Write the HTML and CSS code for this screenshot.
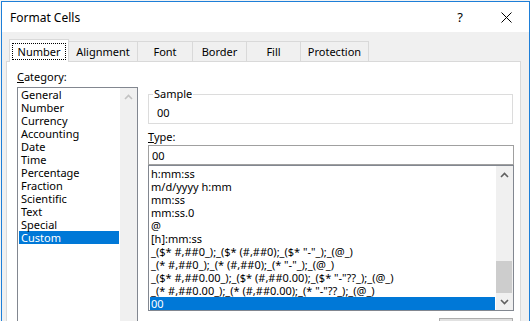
FILE: index.html
```html
<!DOCTYPE html>
<html lang="en">
<head>
    <meta charset="UTF-8">
    <meta name="viewport" content="width=device-width, initial-scale=1.0">
    <title>Format Cells</title>
    <link rel="stylesheet" href="styles.css">
</head>
<body>
    <div class="window" role="dialog" aria-labelledby="dlg-title">
        <!-- Title bar -->
        <div class="titlebar">
            <span id="dlg-title" class="title">Format Cells</span>
            <span class="help">?</span>
            <span class="close" aria-label="Close">
                <svg width="11" height="11" viewBox="0 0 11 11">
                    <path d="M0.5 0.5 L10.5 10.5 M10.5 0.5 L0.5 10.5" stroke="#000" stroke-width="1" fill="none"/>
                </svg>
            </span>
        </div>

        <div class="dlg-body">
            <!-- Tabs -->
            <div class="tabs">
                <div class="tab tab-active"><span class="focus">Number</span></div>
                <div class="tab tab-align">Alignment</div>
                <div class="tab tab-font">Font</div>
                <div class="tab tab-border">Border</div>
                <div class="tab tab-fill">Fill</div>
                <div class="tab tab-prot">Protection</div>
            </div>

            <div class="panel">
                <!-- Category column -->
                <div class="col-left">
                    <div class="label"><u>C</u>ategory:</div>
                    <div class="listbox cat-list">
                        <ul class="items">
                            <li>General</li>
                            <li>Number</li>
                            <li>Currency</li>
                            <li>Accounting</li>
                            <li>Date</li>
                            <li>Time</li>
                            <li>Percentage</li>
                            <li>Fraction</li>
                            <li>Scientific</li>
                            <li>Text</li>
                            <li>Special</li>
                            <li class="selected">Custom</li>
                        </ul>
                        <div class="scrollbar">
                            <div class="arrow">
                                <svg width="9" height="6" viewBox="0 0 9 6"><path d="M1 5 L4.5 1.5 L8 5" stroke="#c2c2c2" stroke-width="1.6" fill="none"/></svg>
                            </div>
                        </div>
                    </div>
                </div>

                <!-- Sample / type column -->
                <div class="col-right">
                    <fieldset class="sample">
                        <legend>Sample</legend>
                        <div class="sample-value">00</div>
                    </fieldset>

                    <div class="label type-label"><u>T</u>ype:</div>
                    <input class="type-input" type="text" value="00">

                    <div class="listbox type-list">
                        <ul class="items">
                            <li>h:mm:ss</li>
                            <li>m/d/yyyy h:mm</li>
                            <li>mm:ss</li>
                            <li>mm:ss.0</li>
                            <li>@</li>
                            <li>[h]:mm:ss</li>
                            <li>_($* #,##0_);_($* (#,##0);_($* "-"_);_(@_)</li>
                            <li>_(* #,##0_);_(* (#,##0);_(* "-"_);_(@_)</li>
                            <li>_($* #,##0.00_);_($* (#,##0.00);_($* "-"??_);_(@_)</li>
                            <li>_(* #,##0.00_);_(* (#,##0.00);_(* "-"??_);_(@_)</li>
                            <li class="selected">00</li>
                        </ul>
                        <div class="scrollbar">
                            <div class="arrow">
                                <svg width="9" height="6" viewBox="0 0 9 6"><path d="M1 5 L4.5 1.5 L8 5" stroke="#606060" stroke-width="1.6" fill="none"/></svg>
                            </div>
                            <div class="track"><div class="thumb"></div></div>
                            <div class="arrow">
                                <svg width="9" height="6" viewBox="0 0 9 6"><path d="M1 1 L4.5 4.5 L8 1" stroke="#606060" stroke-width="1.6" fill="none"/></svg>
                            </div>
                        </div>
                    </div>

                    <div class="btn-row">
                        <button class="btn" aria-label="Delete"></button>
                    </div>
                </div>
            </div>
        </div>
    </div>
</body>
</html>
```

FILE: styles.css
```css
/* Format Cells dialog */
html, body {
    margin: 0;
    height: 100%;
    overflow: hidden;
}

body {
    background-color: #f3f3f3;
    font-family: "Noto Sans", "Open Sans", sans-serif;
    font-size: 11px;
    color: #000;
}

.window {
    box-sizing: border-box;
    width: 529px;
    height: 340px;
    margin: 1px 0 0 1px;
    border: 1px solid #1e7fd8;
    background-color: #f0f0f0;
}

/* Title bar */
.titlebar {
    height: 30px;
    background-color: #fff;
    display: flex;
    align-items: center;
    padding-left: 8px;
}

.title {
    flex: 1;
    font-size: 12px;
}

.help {
    font-size: 13px;
    width: 46px;
    padding-left: 4px;
    text-align: center;
}

.close {
    width: 46px;
    display: flex;
    justify-content: center;
}

/* Body */
.dlg-body {
    padding: 7px 8px 0 4px;
}

.tabs {
    display: flex;
    align-items: flex-end;
    height: 22px;
    padding-left: 3px;
}

.tab {
    box-sizing: border-box;
    height: 20px;
    line-height: 19px;
    border-top: 1px solid #d9d9d9;
    border-right: 1px solid #d9d9d9;
    text-align: center;
    background-color: #f0f0f0;
}

.tab-active {
    position: relative;
    z-index: 1;
    width: 60px;
    height: 23px;
    margin-bottom: -1px;
    border: 1px solid #d9d9d9;
    border-bottom: none;
    background-color: #fff;
    padding-top: 3px;
    line-height: 13px;
}

.focus {
    display: inline-block;
    border: 1px dotted #000;
    padding: 1px 5px;
}

.tab-align  { width: 69px; }
.tab-font   { width: 55px; }
.tab-border { width: 54px; }
.tab-fill   { width: 54px; }
.tab-prot   { width: 68px; }

.panel {
    display: flex;
    gap: 10px;
    height: 300px;
    border: 1px solid #d9d9d9;
    background-color: #fff;
    padding: 8px 6px 0 10px;
}

.label {
    line-height: 14px;
    height: 14px;
}

/* List boxes */
.col-left {
    width: 121px;
}

.listbox {
    display: flex;
    box-sizing: border-box;
    border: 1px solid #828790;
    background-color: #fff;
}

.cat-list {
    margin-top: 3px;
    height: 240px;
}

.items {
    list-style: none;
    margin: 0;
    padding: 0 1px;
    flex: 1;
    overflow: hidden;
}

.items li {
    height: 13px;
    line-height: 13px;
    padding-left: 2px;
    white-space: nowrap;
}

.items li.selected {
    background-color: #0078d7;
    color: #fff;
}

.scrollbar {
    width: 17px;
    background-color: #f0f0f0;
    display: flex;
    flex-direction: column;
}

.arrow {
    height: 17px;
    display: flex;
    align-items: center;
    justify-content: center;
}

.track {
    flex: 1;
    display: flex;
    flex-direction: column;
}

.thumb {
    margin: auto 1px 0 0;
    height: 32px;
    background-color: #cdcdcd;
}

/* Right column */
.col-right {
    flex: 1;
    display: flex;
    flex-direction: column;
}

.sample {
    margin: 17px 1px 0 0;
    padding: 5px 8px 3px;
    border: 1px solid #dcdcdc;
    min-width: 0;
}

.sample legend {
    padding: 0 1px;
    margin-left: -4px;
    line-height: 14px;
}

.sample-value {
    line-height: 14px;
}

.type-label {
    margin-top: 6px;
}

.type-input {
    box-sizing: border-box;
    margin: 1px 0 0;
    height: 20px;
    padding: 0 3px;
    border: 1px solid #a0a0a0;
    font-family: inherit;
    font-size: 11px;
    color: #000;
    outline: none;
}

.type-list {
    height: 146px;
}

.type-list .items {
    padding-top: 1px;
}

.type-list .items li {
    padding-left: 1px;
}

.btn-row {
    display: flex;
    justify-content: flex-end;
    margin-top: 7px;
    padding-right: 1px;
}

.btn {
    width: 74px;
    height: 22px;
    border: 1px solid #adadad;
    background-color: #e1e1e1;
}
```
